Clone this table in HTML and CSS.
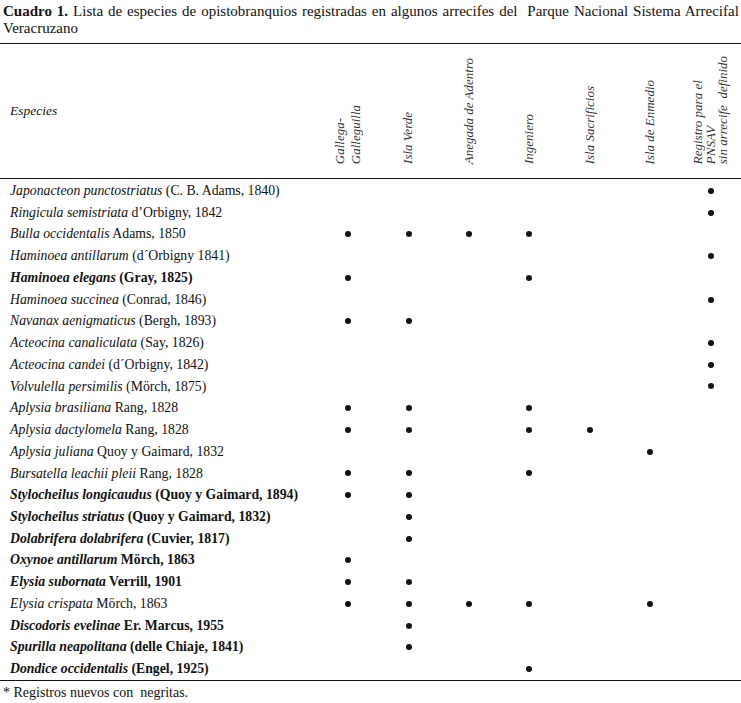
FILE: index.html
```html
<!DOCTYPE html>
<html lang="es">
<head>
<meta charset="utf-8">
<title>Cuadro 1</title>
<link rel="stylesheet" href="styles.css">
</head>
<body>
<div class="page">
  <p class="caption"><b>Cuadro 1.</b> Lista de especies de opistobranquios registradas en algunos arrecifes del&nbsp; Parque Nacional Sistema Arrecifal<br>Veracruzano</p>
  <div class="table">
    <div class="head">
      <div class="hcell species-head"><i>Especies</i></div>
      <div class="hcell"><span class="vt wide">Gallega-<br>Galleguilla</span></div>
      <div class="hcell"><span class="vt">Isla Verde</span></div>
      <div class="hcell"><span class="vt">Anegada de Adentro</span></div>
      <div class="hcell"><span class="vt">Ingeniero</span></div>
      <div class="hcell"><span class="vt">Isla Sacrificios</span></div>
      <div class="hcell"><span class="vt">Isla de Enmedio</span></div>
      <div class="hcell"><span class="vt">Registro para el<br>PNSAV<br>sin arrecife&nbsp; definido</span></div>
    </div>
    <div class="body" id="rows"></div>
  </div>
  <p class="note">* Registros nuevos con&nbsp; negritas.</p>
</div>
<script src="app.js"></script>
</body>
</html>
```

FILE: app.js
```js
const rows = [
  ["Japonacteon punctostriatus", " (C. B. Adams, 1840)", false, [6]],
  ["Ringicula semistriata", " d\u2019Orbigny, 1842", false, [6]],
  ["Bulla occidentalis", " Adams, 1850", false, [0,1,2,3]],
  ["Haminoea antillarum", " (d\u00b4Orbigny 1841)", false, [6]],
  ["Haminoea elegans", " (Gray, 1825)", true, [0,3]],
  ["Haminoea succinea", " (Conrad, 1846)", false, [6]],
  ["Navanax aenigmaticus", " (Bergh, 1893)", false, [0,1]],
  ["Acteocina canaliculata", " (Say, 1826)", false, [6]],
  ["Acteocina candei", " (d\u00b4Orbigny, 1842)", false, [6]],
  ["Volvulella persimilis", " (M\u00f6rch, 1875)", false, [6]],
  ["Aplysia brasiliana", " Rang, 1828", false, [0,1,3]],
  ["Aplysia dactylomela", " Rang, 1828", false, [0,1,3,4]],
  ["Aplysia juliana", " Quoy y Gaimard, 1832", false, [5]],
  ["Bursatella leachii pleii", " Rang, 1828", false, [0,1,3]],
  ["Stylocheilus longicaudus", " (Quoy y Gaimard, 1894)", true, [0,1]],
  ["Stylocheilus striatus", " (Quoy y Gaimard, 1832)", true, [1]],
  ["Dolabrifera dolabrifera", " (Cuvier, 1817)", true, [1]],
  ["Oxynoe antillarum", " M\u00f6rch, 1863", true, [0]],
  ["Elysia subornata", " Verrill, 1901", true, [0,1]],
  ["Elysia crispata", " M\u00f6rch, 1863", false, [0,1,2,3,5]],
  ["Discodoris evelinae", " Er. Marcus, 1955", true, [1]],
  ["Spurilla neapolitana", " (delle Chiaje, 1841)", true, [1]],
  ["Dondice occidentalis", " (Engel, 1925)", true, [3]]
];
const body = document.getElementById("rows");
for (const [name, author, bold, marks] of rows) {
  const row = document.createElement("div");
  row.className = "row" + (bold ? " new" : "");
  const sp = document.createElement("div");
  sp.className = "species";
  const i = document.createElement("i");
  i.textContent = name;
  sp.appendChild(i);
  sp.appendChild(document.createTextNode(author));
  row.appendChild(sp);
  for (let c = 0; c < 7; c++) {
    const cell = document.createElement("div");
    cell.className = "mark";
    if (marks.includes(c)) {
      const d = document.createElement("span");
      d.className = "dot";
      cell.appendChild(d);
    }
    row.appendChild(cell);
  }
  body.appendChild(row);
}
```

FILE: styles.css
```css
html, body {
  margin: 0;
  padding: 0;
  background: #fff;
}
body {
  font-family: "Liberation Serif", "Times New Roman", serif;
  color: #111;
  width: 741px;
}
.page {
  width: 741px;
}
.caption {
  margin: 0;
  padding: 3px 0 0 3px;
  font-size: 15px;
  line-height: 17px;
  height: 40px;
  white-space: nowrap;
  word-spacing: 1.2px;
}
.table {
  border-top: 1.5px solid #111;
  border-bottom: 1.5px solid #111;
}
.head, .row {
  display: grid;
  grid-template-columns: 318px repeat(7, 1fr);
}
.head {
  height: 134px;
  border-bottom: 1.5px solid #111;
}
.hcell {
  display: flex;
  align-items: flex-end;
  justify-content: center;
  padding-bottom: 14px;
}
.species-head {
  justify-content: flex-start;
  align-items: center;
  padding: 0 0 0 10px;
  font-size: 13.5px;
}
.vt {
  writing-mode: vertical-rl;
  transform: rotate(180deg);
  font-style: italic;
  font-size: 13px;
  line-height: 12.5px;
  color: #333;
  white-space: nowrap;
}
.vt.wide {
  line-height: 16px;
}
.body {
  padding-top: 1px;
}
.row {
  height: 21.74px;
  font-size: 13.75px;
  line-height: 21.74px;
}
.species {
  padding-left: 10px;
  white-space: nowrap;
}
.row.new .species {
  font-weight: bold;
}
.mark {
  display: flex;
  align-items: center;
  justify-content: center;
}
.dot {
  width: 6px;
  height: 6px;
  border-radius: 50%;
  background: #111;
}
.note {
  margin: 0;
  padding: 4px 0 0 3px;
  font-size: 14px;
  line-height: 16px;
}
```
